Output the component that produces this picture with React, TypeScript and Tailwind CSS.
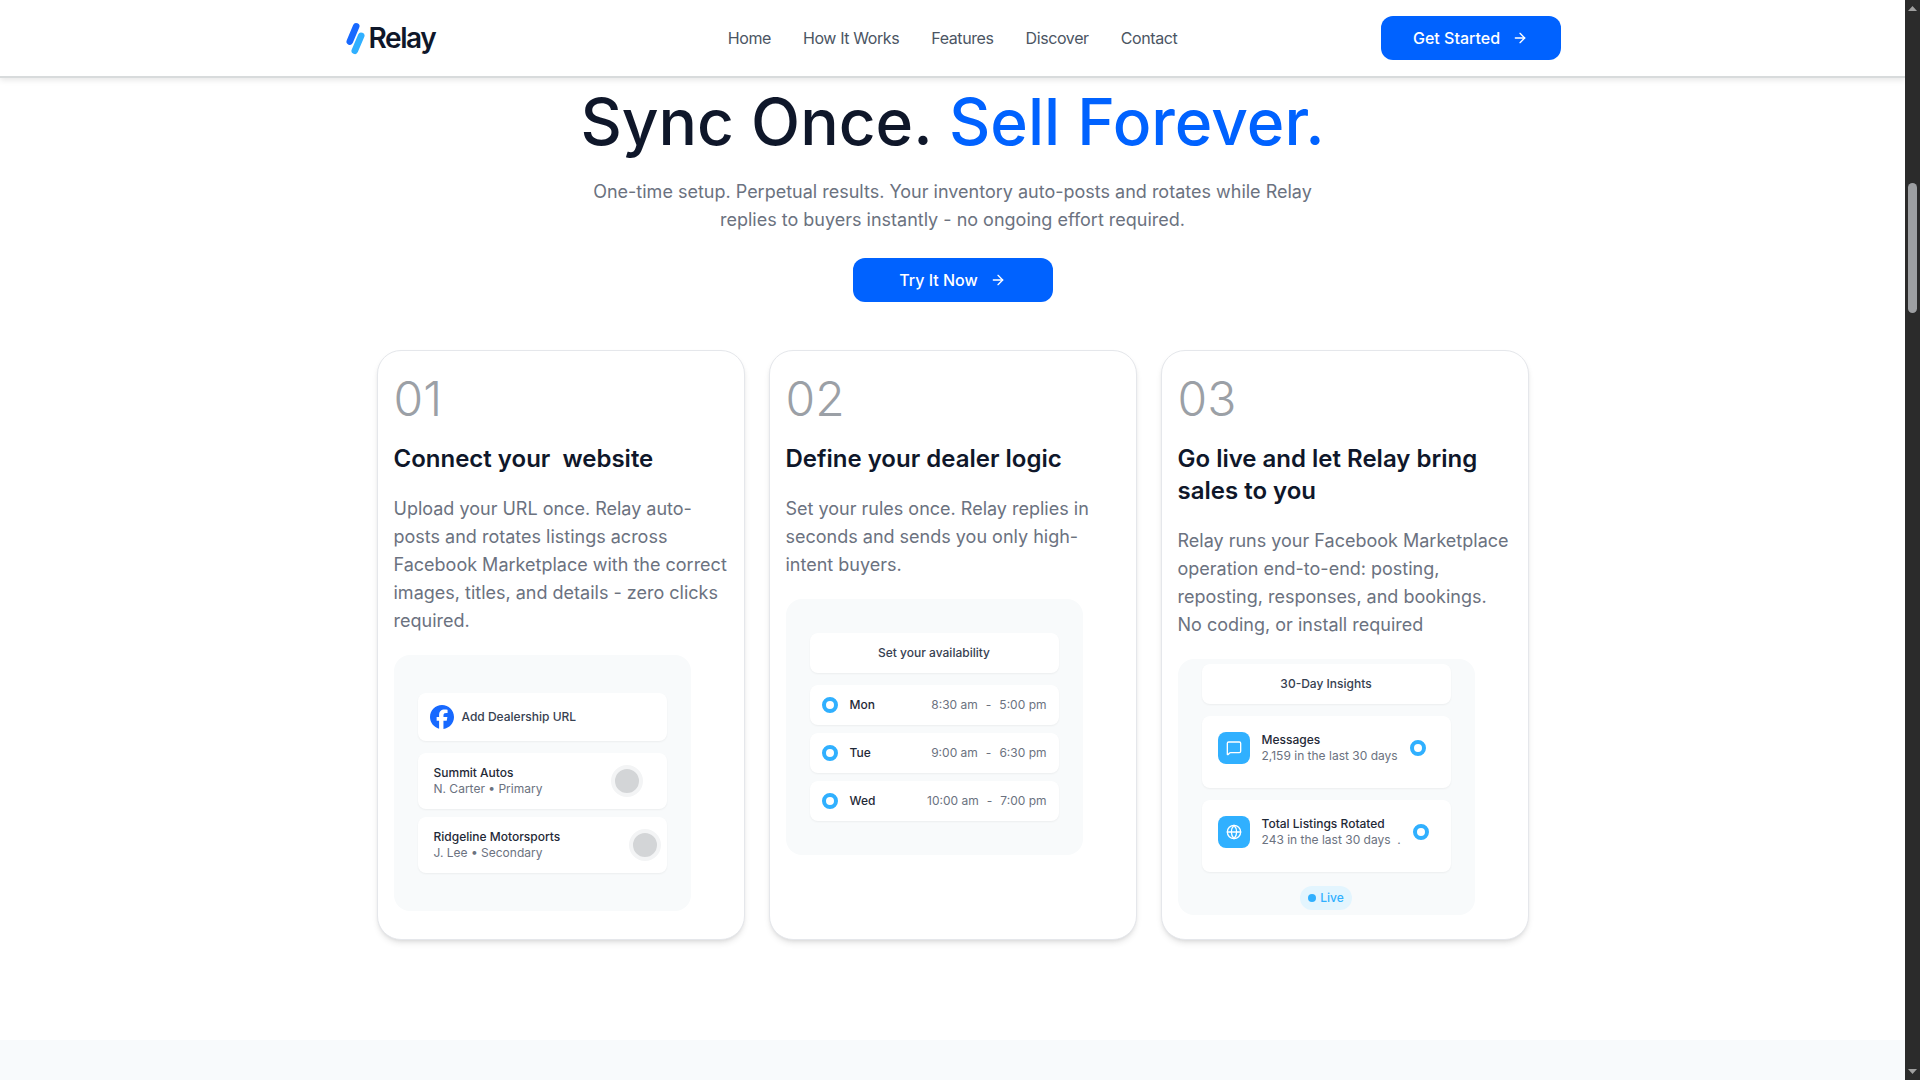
import type { ReactNode } from "react";
import { ArrowRight, Globe, MessageSquare } from "lucide-react";
import { FaFacebook } from "react-icons/fa6";

const navItems = ["Home", "How It Works", "Features", "Discover", "Contact"];

const accounts = [
  { name: "Summit Autos", detail: "N. Carter • Primary" },
  { name: "Ridgeline Motorsports", detail: "J. Lee • Secondary" },
];

const hours = [
  { day: "Mon", from: "8:30 am", to: "5:00 pm" },
  { day: "Tue", from: "9:00 am", to: "6:30 pm" },
  { day: "Wed", from: "10:00 am", to: "7:00 pm" },
];

const insights = [
  { icon: MessageSquare, title: "Messages", detail: "2,159 in the last 30 days" },
  { icon: Globe, title: "Total Listings Rotated", detail: "243 in the last 30 days  ." },
];

function Logo() {
  return (
    <a href="#home" className="flex items-center gap-1 justify-self-start text-[#0f172a]">
      <svg width="20" height="34" viewBox="0 0 20 34" fill="none" strokeLinecap="round" strokeWidth="6.6" aria-hidden="true">
        <path d="M11.2 5.3 4.8 20.6" stroke="#1769ff" />
        <path d="M16.2 14.8 9.8 29.8" stroke="#30b0ff" />
      </svg>
      <span className="text-[28px] leading-8 font-semibold tracking-tighter">Relay</span>
    </a>
  );
}

function ActionButton({ label, className }: { label: string; className: string }) {
  return (
    <button
      type="button"
      className={`flex h-11 items-center justify-center gap-3 rounded-xl bg-[#0062ff] text-base font-medium text-white ${className}`}
    >
      {label}
      <ArrowRight size={16} strokeWidth={2} aria-hidden="true" />
    </button>
  );
}

function Header() {
  return (
    <header className="relative bg-white shadow-[0_2px_0_#d8dbdc,0_4px_6px_rgba(0,0,0,0.1)]">
      <div className="mx-auto grid h-19 max-w-7xl grid-cols-[1fr_auto_1fr] items-center px-8">
        <Logo />
        <nav className="flex gap-8 text-base tracking-tight text-[#4b5563]">
          {navItems.map((item) => (
            <a key={item} href={`#${item.toLowerCase().replaceAll(" ", "-")}`}>
              {item}
            </a>
          ))}
        </nav>
        <ActionButton label="Get Started" className="w-45 justify-self-end" />
      </div>
    </header>
  );
}

function StepCard({ step, title, text, children }: { step: string; title: string; text: string; children: ReactNode }) {
  return (
    <article className="flex flex-col gap-5 rounded-3xl border border-gray-200 bg-white px-4 py-6 shadow-md">
      <div className="text-5xl leading-12 font-light text-[#9ba0a6]">{step}</div>
      <h3 className="text-2xl leading-8 font-semibold whitespace-pre-wrap text-[#0f172a]">{title}</h3>
      <p className="text-lg leading-7 text-[#6b7280]">{text}</p>
      <div className="flex h-64 w-[297px] max-w-full flex-col justify-center overflow-hidden rounded-2xl bg-[#f8fafb] px-6 text-xs leading-4">
        {children}
      </div>
    </article>
  );
}

function PanelTitle({ children }: { children: ReactNode }) {
  return (
    <div className="mb-3 flex h-10 shrink-0 items-center justify-center rounded-lg bg-white font-medium text-[#374151] shadow-xs">
      {children}
    </div>
  );
}

function Ring() {
  return <span className="size-4 shrink-0 rounded-full border-4 border-[#30b0ff] bg-white" />;
}

function Lines({ title, detail }: { title: string; detail: string }) {
  return (
    <div className="whitespace-pre">
      <div className="font-medium text-[#1f2937]">{title}</div>
      <div className="text-[#6b7280]">{detail}</div>
    </div>
  );
}

function AccountsPanel() {
  return (
    <>
      <div className="mb-3 flex h-12 items-center gap-2 rounded-lg bg-white px-3 font-medium text-[#374151] shadow-xs">
        <FaFacebook size={24} color="#1769ff" aria-hidden="true" />
        Add Dealership URL
      </div>
      <div className="flex flex-col gap-2">
        {accounts.map((account) => (
          <div key={account.name} className="flex h-14 items-center gap-[69px] rounded-lg bg-white pl-4 shadow-xs">
            <Lines title={account.name} detail={account.detail} />
            <span className="size-8 shrink-0 rounded-full border-4 border-[#f3f4f5] bg-[#d3d5d7]" />
          </div>
        ))}
      </div>
    </>
  );
}

function HoursPanel() {
  return (
    <>
      <PanelTitle>Set your availability</PanelTitle>
      <div className="flex flex-col gap-2">
        {hours.map((row) => (
          <div key={row.day} className="flex h-10 items-center gap-3 rounded-lg bg-white px-3 shadow-xs">
            <Ring />
            <span className="font-medium text-[#1f2937]">{row.day}</span>
            <span className="ml-auto flex gap-2 text-[#6b7280]">
              <span>{row.from}</span>
              <span>-</span>
              <span>{row.to}</span>
            </span>
          </div>
        ))}
      </div>
    </>
  );
}

function InsightsPanel() {
  return (
    <>
      <PanelTitle>30-Day Insights</PanelTitle>
      <div className="flex flex-col gap-3">
        {insights.map(({ icon: Icon, title, detail }) => (
          <div key={title} className="flex h-18 items-start rounded-lg bg-white p-4 shadow-xs">
            <div className="flex items-center gap-3">
              <span className="flex size-8 shrink-0 items-center justify-center rounded-lg bg-[#30b0ff] text-white">
                <Icon size={16} strokeWidth={2} aria-hidden="true" />
              </span>
              <Lines title={title} detail={detail} />
              <Ring />
            </div>
          </div>
        ))}
      </div>
      <div className="mt-3.5 flex h-6 shrink-0 items-center gap-1 self-center rounded-full bg-[#e3f5fe] px-2 font-medium text-[#30b0ff]">
        <span className="size-2 rounded-full bg-[#30b0ff]" />
        Live
      </div>
    </>
  );
}

function Scrollbar() {
  return (
    <div className="sticky top-0 flex h-screen w-[15px] shrink-0 flex-col items-center bg-[#2b2b2b] py-1.5" aria-hidden="true">
      <svg width="9" height="5" viewBox="0 0 9 5" fill="#9f9f9f">
        <path d="M4.5 0 9 5H0z" />
      </svg>
      <div className="mt-43 h-[130px] w-[9px] rounded-full bg-[#9d9fa2]" />
      <svg className="mt-auto" width="9" height="5" viewBox="0 0 9 5" fill="#9f9f9f">
        <path d="M4.5 5 0 0h9z" />
      </svg>
    </div>
  );
}

export default function App() {
  return (
    <div className="flex min-h-screen bg-white font-['Inter',sans-serif]">
      <div className="flex min-w-0 grow flex-col">
        <Header />
        <main className="flex grow flex-col">
          <section className="mx-auto flex w-full max-w-6xl flex-col items-center pt-2.5 pb-25">
            <h1 className="mb-5 text-center text-[64px] leading-[72px] font-medium text-[#0f172a]">
              Sync Once. <span className="text-[#0062ff]">Sell Forever.</span>
            </h1>
            <p className="mb-6 max-w-3xl text-center text-lg leading-7 text-[#6b7280]">
              One-time setup. Perpetual results. Your inventory auto-posts and rotates while Relay replies to buyers
              instantly - no ongoing effort required.
            </p>
            <ActionButton label="Try It Now" className="w-50" />
            <div className="mt-12 grid w-full grid-cols-3 gap-6">
              <StepCard
                step="01"
                title="Connect your  website"
                text="Upload your URL once. Relay auto-posts and rotates listings across Facebook Marketplace with the correct images, titles, and details - zero clicks required."
              >
                <AccountsPanel />
              </StepCard>
              <StepCard
                step="02"
                title="Define your dealer logic"
                text="Set your rules once. Relay replies in seconds and sends you only high-intent buyers."
              >
                <HoursPanel />
              </StepCard>
              <StepCard
                step="03"
                title="Go live and let Relay bring sales to you"
                text="Relay runs your Facebook Marketplace operation end-to-end: posting, reposting, responses, and bookings. No coding, or install required"
              >
                <InsightsPanel />
              </StepCard>
            </div>
          </section>
          <section className="grow bg-[#f8fafc]" />
        </main>
      </div>
      <Scrollbar />
    </div>
  );
}
